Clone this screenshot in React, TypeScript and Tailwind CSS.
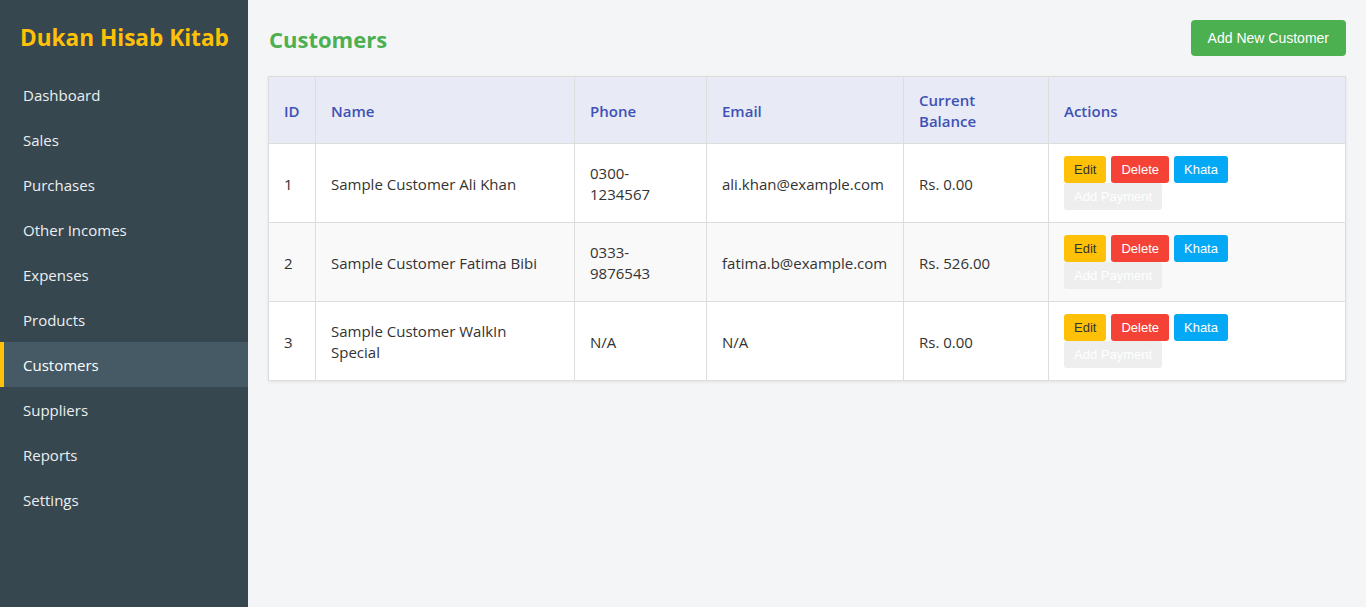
import React from 'react';

interface Customer {
  id: number;
  name: string;
  phone: string;
  email: string;
  balance: string;
}

const navItems = [
  'Dashboard',
  'Sales',
  'Purchases',
  'Other Incomes',
  'Expenses',
  'Products',
  'Customers',
  'Suppliers',
  'Reports',
  'Settings',
];

const customers: Customer[] = [
  { id: 1, name: 'Sample Customer Ali Khan', phone: '0300-1234567', email: 'ali.khan@example.com', balance: 'Rs. 0.00' },
  { id: 2, name: 'Sample Customer Fatima Bibi', phone: '0333-9876543', email: 'fatima.b@example.com', balance: 'Rs. 526.00' },
  { id: 3, name: 'Sample Customer WalkIn Special', phone: 'N/A', email: 'N/A', balance: 'Rs. 0.00' },
];

const font = { fontFamily: '"Segoe UI", "Open Sans", "Noto Sans", sans-serif' };
const btnFont = { fontFamily: '"Liberation Sans", Arial, sans-serif' };

export default function App() {
  return (
    <div className="flex min-h-[607px] w-full bg-[#f4f5f7] text-[15px] leading-[21px] text-[#333]" style={font}>
      {/* Sidebar */}
      <aside className="w-[248px] shrink-0 bg-[#37474f] pt-[22px]">
        <h1 className="px-[20px] whitespace-nowrap text-[22.6px] leading-[32px] font-bold text-[#ffc107] mb-[18px]">
          Dukan Hisab Kitab
        </h1>
        <nav>
          {navItems.map((item) =>
            item === 'Customers' ? (
              <a
                key={item}
                href="#"
                className="block pt-[13px] pb-[11px] pl-[19px] border-l-4 border-[#ffc107] bg-[#455a64] text-white"
              >
                {item}
              </a>
            ) : (
              <a key={item} href="#" className="block pt-[13px] pb-[11px] pl-[23px] text-[#eceff1]">
                {item}
              </a>
            )
          )}
        </nav>
      </aside>

      {/* Main */}
      <main className="flex-1 p-[20px]">
        <div className="flex items-center justify-between mb-[20px] h-[36px]">
          <h2 className="pl-[1px] text-[22px] leading-[32px] font-bold text-[#4caf50] pt-[2px]">Customers</h2>
          <button className="h-[36px] px-[17px] rounded-[4px] bg-[#4caf50] text-white text-[14px]" style={btnFont}>
            Add New Customer
          </button>
        </div>

        <table className="w-full table-fixed border-collapse bg-white shadow-[0_1px_3px_rgba(0,0,0,0.08)]">
          <colgroup>
            <col className="w-[47px]" />
            <col className="w-[259px]" />
            <col className="w-[132px]" />
            <col className="w-[197px]" />
            <col className="w-[145px]" />
            <col />
          </colgroup>
          <thead>
            <tr className="bg-[#e8eaf6] text-[#3f51b5]">
              {['ID', 'Name', 'Phone', 'Email', 'Current Balance', 'Actions'].map((h) => (
                <th key={h} className="border border-[#ddd] px-[15px] pt-[13px] pb-[11px] text-left font-semibold">
                  {h}
                </th>
              ))}
            </tr>
          </thead>
          <tbody>
            {customers.map((c, i) => (
              <tr key={c.id} className={i % 2 === 1 ? 'bg-[#f9f9f9]' : 'bg-white'}>
                <td className="border border-[#ddd] px-[15px] pt-[13px] pb-[11px]">{c.id}</td>
                <td className="border border-[#ddd] px-[15px] pt-[13px] pb-[11px]">{c.name}</td>
                <td className="border border-[#ddd] px-[15px] pt-[13px] pb-[11px]">
                  <span className="block max-w-[80px]">{c.phone}</span>
                </td>
                <td className="border border-[#ddd] px-[15px] pt-[13px] pb-[11px] whitespace-nowrap">{c.email}</td>
                <td className="border border-[#ddd] px-[15px] pt-[13px] pb-[11px]">{c.balance}</td>
                <td className="border border-[#ddd] px-[15px] py-[12px]">
                  <div className="flex flex-wrap w-[175px] text-[13px] leading-[15px]" style={btnFont}>
                    <button className="h-[27px] px-[10px] mr-[5px] rounded-[3px] bg-[#ffc107] text-[#333]">Edit</button>
                    <button className="h-[27px] px-[10px] mr-[5px] rounded-[3px] bg-[#f44336] text-white">Delete</button>
                    <button className="h-[27px] px-[10px] rounded-[3px] bg-[#03a9f4] text-white">Khata</button>
                    <button className="h-[27px] px-[10px] rounded-[3px] bg-[#eeeeee] text-white" disabled>
                      Add Payment
                    </button>
                  </div>
                </td>
              </tr>
            ))}
          </tbody>
        </table>
      </main>
    </div>
  );
}
